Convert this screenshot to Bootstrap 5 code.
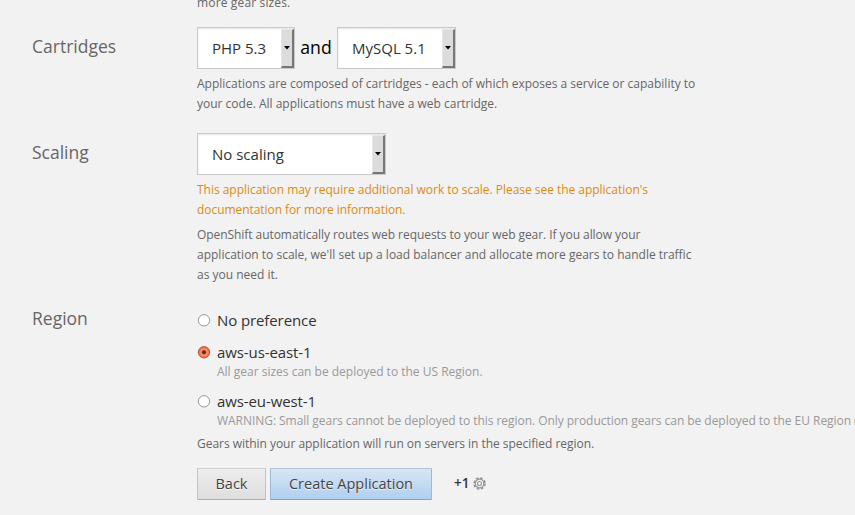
<!DOCTYPE html>
<html lang="en">
<head>
<meta charset="utf-8">
<title>Create Application</title>
<link href="https://cdn.jsdelivr.net/npm/bootstrap@5.3.0/dist/css/bootstrap.min.css" rel="stylesheet">
<style>
body{background:#f2f2f2;font-family:"Open Sans","Noto Sans",sans-serif;height:515px;font-size:12px;line-height:20px;color:#666;white-space:nowrap}
.app-form{padding-left:32px;padding-top:13px;height:515px}
.intro-line{margin:-20px 0 14px 165px;letter-spacing:.15px}
.form-line{height:106px}
.form-line.scaling{height:166px}
.form-title{width:165px;flex:none;font-size:17.5px;line-height:24px;padding-top:7px;color:#666}
.hint-gap{margin-top:5px}
.fit-a{letter-spacing:-.03px}
.fit-b{letter-spacing:-.06px}
.fit-c{letter-spacing:-.045px}
.picker{height:42px;border:1px solid #c9c9c9;background:#fff;box-shadow:inset 0 1px 2px #e4e4e4;font-size:15px;color:#333;padding-left:14px}
.picker-arrow{width:13px;height:39px;margin-top:1px;background:#dcdcdc;border:1px solid #e6e6e6;border-right:2px solid #777;border-bottom:2px solid #777}
.w-php{width:98px}.w-sql{width:119px}.w-scale{width:189px}
.joiner{font-size:17.7px;color:#000;width:42px;text-align:center;padding-bottom:3px}
.warn-text{color:#db8b12}
.choice{height:24px;font-size:15px;line-height:24px;color:#333;letter-spacing:-.1px}
.dot{width:14px;height:14px;margin-right:6px;flex:none}
.sub{color:#999;padding-left:20px;height:20px;margin-top:-2px}
.btn-app{--bs-btn-font-size:14.5px;--bs-btn-line-height:20px;--bs-btn-padding-y:4px;--bs-btn-border-radius:1px;--bs-btn-color:#444;height:32px;text-shadow:0 1px 1px rgba(255,255,255,.75)}
.btn-back{background:linear-gradient(#ededed,#dedede);border-color:#cfcfcf #c4c4c4 #b0b0b0;width:69px}
.btn-create{background:linear-gradient(#d8e5f4,#afcff1);border-color:#b0c3da #9fb8d4 #85a3c6;width:162px}
.gear-count{font-size:13.5px;font-weight:600;color:#333;margin-left:22px;padding-bottom:2px}
</style>
<script src="https://cdn.jsdelivr.net/npm/bootstrap@5.3.0/dist/js/bootstrap.bundle.min.js"></script>
</head>
<body class="m-0 overflow-hidden">
<form class="app-form overflow-hidden">
  <div class="intro-line">more gear sizes.</div>
  <div class="form-line d-flex">
    <div class="form-title">Cartridges</div>
    <div>
      <div class="d-flex align-items-center">
        <div class="picker w-php d-flex justify-content-between"><span class="align-self-center">PHP 5.3</span><span class="picker-arrow d-flex align-items-center justify-content-center"><svg width="6" height="4"><path d="M0 0h6L3 3.5z" fill="#000"/></svg></span></div>
        <span class="joiner">and</span>
        <div class="picker w-sql d-flex justify-content-between"><span class="align-self-center">MySQL 5.1</span><span class="picker-arrow d-flex align-items-center justify-content-center"><svg width="6" height="4"><path d="M0 0h6L3 3.5z" fill="#000"/></svg></span></div>
      </div>
      <div class="hint-gap">Applications are composed of cartridges - each of which exposes a service or capability to<br>your code. All applications must have a web cartridge.</div>
    </div>
  </div>
  <div class="form-line scaling d-flex">
    <div class="form-title">Scaling</div>
    <div>
      <div class="picker w-scale d-flex justify-content-between"><span class="align-self-center">No scaling</span><span class="picker-arrow d-flex align-items-center justify-content-center"><svg width="6" height="4"><path d="M0 0h6L3 3.5z" fill="#000"/></svg></span></div>
      <div class="warn-text hint-gap"><span class="fit-a">This application may require additional work to scale. Please see the application's</span><br><span class="fit-b">documentation for more information.</span></div>
      <div class="hint-gap"><span class="fit-b">OpenShift automatically routes web requests to your web gear. If you allow your</span><br>application to scale, we'll set up a load balancer and allocate more gears to handle traffic<br>as you need it.</div>
    </div>
  </div>
  <div class="d-flex">
    <div class="form-title">Region</div>
    <div class="pt-2 mt-1">
      <div class="choice d-flex align-items-center" style="margin:-3px 0 8px"><svg class="dot" viewBox="0 0 14 14"><circle cx="7" cy="7.3" r="5.7" fill="#fff" stroke="#999"/></svg>No preference</div>
      <div class="choice d-flex align-items-center"><svg class="dot" viewBox="0 0 14 14"><circle cx="7" cy="7.3" r="5.7" fill="#f1764c" stroke="#b0563a"/><circle cx="7" cy="7.3" r="3.4" fill="#ee7952" stroke="#f79a76"/><circle cx="7" cy="7.3" r="2" fill="#5e3024"/></svg>aws-us-east-1</div>
      <div class="sub">All gear sizes can be deployed to the US Region.</div>
      <div class="choice d-flex align-items-center" style="margin-top:7px"><svg class="dot" viewBox="0 0 14 14"><circle cx="7" cy="7.3" r="5.7" fill="#fff" stroke="#999"/></svg>aws-eu-west-1</div>
      <div class="sub fit-c">WARNING: Small gears cannot be deployed to this region. Only production gears can be deployed to the EU Region (</div>
      <div class="fit-a" style="margin-top:3px">Gears within your application will run on servers in the specified region.</div>
      <div class="d-flex align-items-center" style="margin-top:14px">
        <button type="button" class="btn btn-app btn-back px-0 me-1">Back</button>
        <button type="button" class="btn btn-app btn-create px-0">Create Application</button>
        <span class="gear-count d-flex align-items-center">+1
          <svg class="ms-1" width="13" height="13" viewBox="0 0 13 13" fill="none" stroke="#999"><circle cx="6.5" cy="6.5" r="5.4" stroke-width="1.8" stroke-dasharray="2.6 1.64"/><circle cx="6.5" cy="6.5" r="4.3" stroke-width="1.2"/><circle cx="6.5" cy="6.5" r="2" stroke-width="1.1"/></svg></span>
      </div>
    </div>
  </div>
</form>
</body>
</html>
